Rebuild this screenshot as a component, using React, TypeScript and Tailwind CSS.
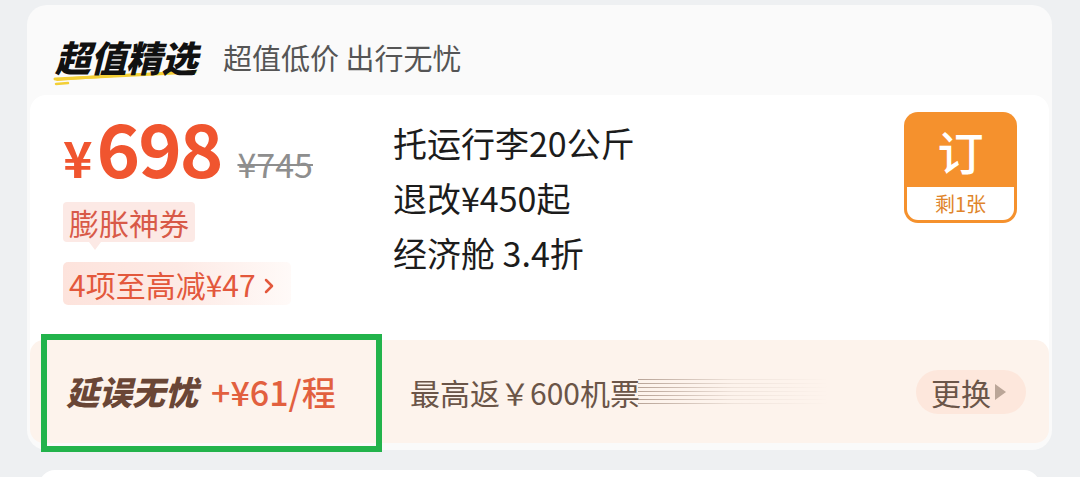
import { ChevronRight } from "lucide-react";

const cjk = "font-['Noto_Sans_CJK_SC',sans-serif]";

function Swoosh() {
  return (
    <svg
      className="absolute left-[-2px] top-[31px]"
      width="152"
      height="20"
      viewBox="0 0 152 20"
    >
      <path
        d="M1 10 C 30 6, 80 5, 148 1 C 110 5, 60 8, 4 12 Z"
        fill="#f3cf35"
      />
      <path d="M2 10 Q 60 7 142 3" stroke="#f3cf35" strokeWidth="3" fill="none" strokeLinecap="round" />
      <path d="M3 15 L 15 14" stroke="#f3cf35" strokeWidth="2.5" strokeLinecap="round" />
    </svg>
  );
}

function BookButton() {
  return (
    <div className="w-[113px] h-[111px] rounded-[14px] bg-[#f5912d] p-[3px] flex flex-col">
      <div className="flex-1 flex items-center justify-center text-white text-[46px] leading-none font-medium pb-[2px]">
        订
      </div>
      <div className="h-[33px] bg-white rounded-b-[11px] flex items-center justify-center text-[#e0852b] text-[20px] leading-none">
        剩1张
      </div>
    </div>
  );
}

export default function App() {
  const features = ["托运行李20公斤", "退改¥450起", "经济舱 3.4折"];

  return (
    <div className={`${cjk} relative w-[1080px] h-[477px] overflow-hidden bg-[#eef0f2] pl-[27px] pr-[28px] pt-[5px]`}>
      <div className="rounded-[20px] bg-[#fafafa] px-[3px] pb-[7px]">
        {/* header */}
        <div className="h-[90px] flex items-center pl-[25px] pt-[14px]">
          <div className="relative">
            <span className="relative z-10 text-[36px] leading-none font-black italic text-[#111] tracking-[-0.5px]">
              超值精选
            </span>
            <Swoosh />
          </div>
          <span className="ml-[26px] text-[29px] leading-none text-[#555]">
            超值低价 出行无忧
          </span>
        </div>

        {/* product card */}
        <div className="rounded-[16px] bg-white">
          <div className="h-[245px] flex">
            <div className="w-[363px] pl-[33px] pt-[14px]">
              <div className="h-[80px] flex items-baseline text-[#f0552f] font-bold leading-none">
                <span className="text-[50px]">¥</span>
                <span className="text-[74px] tracking-[-2px] ml-[4px]">698</span>
                <span className="ml-[16px] text-[34px] font-normal text-[#8e8e8e] line-through decoration-[2px]">
                  ¥745
                </span>
              </div>
              <div className="mt-[13px] relative inline-flex h-[40px] items-center px-[6px] rounded-[4px] bg-[#fce9e5] text-[#d85a48] text-[30px] leading-none">
                膨胀神券
                <span className="absolute left-[26px] bottom-[-8px] w-0 h-0 border-l-[6px] border-r-[6px] border-t-[8px] border-l-transparent border-r-transparent border-t-[#fce9e5]" />
              </div>
              <div className="mt-[20px] flex h-[43px] w-[228px] items-center pl-[6px] rounded-[5px] bg-gradient-to-r from-[#fde3dc] via-[#fdeae5] to-[#fffaf8] text-[#e3583c] text-[30px] leading-none">
                4项至高减¥47
                <ChevronRight className="ml-[1px] mt-[5px]" size={24} strokeWidth={2.5} />
              </div>
            </div>

            <div className="pt-[20px] flex flex-col">
              {features.map((f) => (
                <div key={f} className="h-[55px] flex items-center text-[34px] text-[#1c1c1c] leading-none">
                  {f}
                </div>
              ))}
            </div>

            <div className="ml-auto mr-[32px] mt-[17px]">
              <BookButton />
            </div>
          </div>

          {/* insurance strip */}
          <div className="h-[103px] rounded-[14px] bg-[#fdf3ec] flex items-center">
            <div className="w-[380px] pl-[36px] flex items-center leading-none">
              <span className="text-[33px] font-black italic text-[#6a4636]">延误无忧</span>
              <span className="ml-[13px] text-[34px] font-medium text-[#e2603f]">+¥61/程</span>
            </div>
            <span className="text-[30px] text-[#6b5548] leading-none">最高返￥600机票</span>
            <div className="relative ml-[-2px] h-[26px] w-[190px] bg-[repeating-linear-gradient(180deg,#9c8374_0px,#9c8374_1px,transparent_1px,transparent_4px)] opacity-70">
              <div className="absolute inset-0 bg-gradient-to-r from-transparent via-[#fdf3ec]/80 to-[#fdf3ec]" />
            </div>
            <div className="ml-auto mr-[23px] h-[44px] w-[110px] rounded-full bg-[#fde7dc] flex items-center pl-[15px]">
              <span className="text-[30px] text-[#6b5548] leading-none">更换</span>
              <span className="ml-[4px] w-0 h-0 border-t-[8px] border-b-[8px] border-l-[11px] border-t-transparent border-b-transparent border-l-[#bba698]" />
            </div>
          </div>
        </div>
      </div>

      {/* next card peeking */}
      <div className="mt-[20px] mx-[12px] h-[40px] rounded-t-[16px] bg-white" />

      {/* highlight box */}
      <div className="absolute left-[41px] top-[334px] w-[341px] h-[118px] border-[6px] border-[#22b34b]" />
    </div>
  );
}
